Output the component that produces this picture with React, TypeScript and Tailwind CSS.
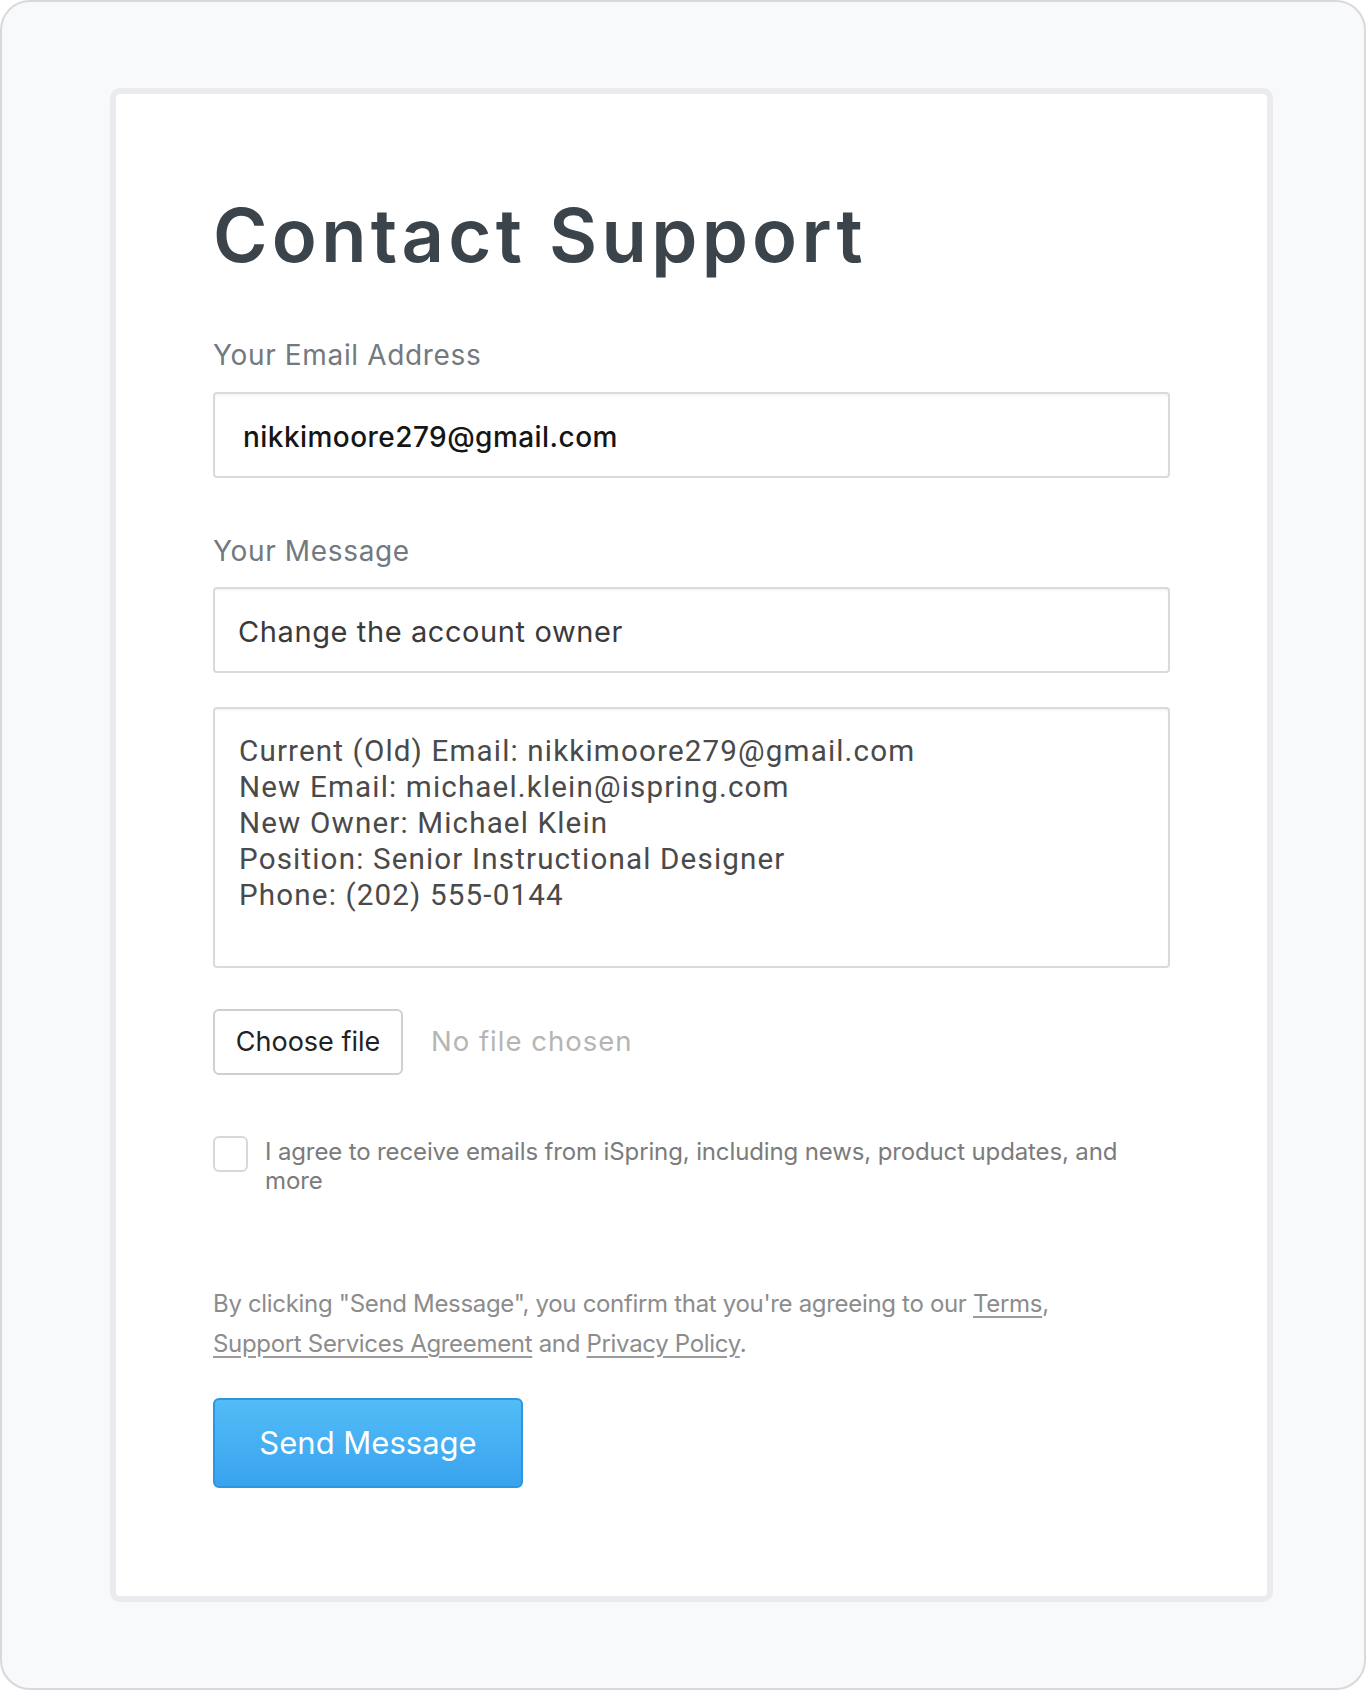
import React from "react";

const UI = { fontFamily: "Inter, 'Open Sans', sans-serif" };
const MONO = { fontFamily: "Roboto, 'Liberation Sans', sans-serif" };

export default function App() {
  return (
    <div
      className="w-[1366px] h-[1690px] bg-[#f8f9fb] border-2 border-[#d9d9dc] rounded-[30px] pl-[108px] pt-[86px]"
      style={UI}
    >
      <div className="w-[1163px] h-[1514px] bg-white border-[6px] border-[#ebebef] rounded-[10px] px-[97px] pt-[104px] flex flex-col">
        <h1 className="text-[74px] leading-[74px] font-semibold text-[#3c444b] tracking-[4.3px] h-[74px] whitespace-nowrap">
          Contact Support
        </h1>

        <label className="mt-[66px] text-[28px] leading-[34px] h-[34px] text-[#72797f] tracking-[0.65px]">
          Your Email Address
        </label>
        <div className="mt-[20px] h-[86px] border-2 border-[#dadada] rounded-[4px] shadow-[inset_0_2px_2px_rgba(0,0,0,0.04)] flex items-center pl-[28px] pt-[4px]">
          <span className="text-[28px] text-[#151515] font-medium tracking-[0.45px]">nikkimoore279@gmail.com</span>
        </div>

        <label className="mt-[56px] text-[28px] leading-[34px] h-[34px] text-[#72797f] tracking-[0.65px]">
          Your Message
        </label>
        <div className="mt-[19px] h-[86px] border-2 border-[#dadada] rounded-[4px] shadow-[inset_0_2px_2px_rgba(0,0,0,0.04)] flex items-center pl-[23px] pt-[4px]">
          <span className="text-[29px] text-[#3a3a3a] tracking-[0.6px]">Change the account owner</span>
        </div>

        <div
          className="mt-[34px] h-[261px] border-2 border-[#dadada] rounded-[4px] shadow-[inset_0_2px_2px_rgba(0,0,0,0.04)] pl-[24px] pt-[25px] text-[29.6px] leading-[35.9px] text-[#4a4a4a] tracking-[1.15px]"
          style={MONO}
        >
          <div>Current (Old) Email: nikkimoore279@gmail.com</div>
          <div>New Email: michael.klein@ispring.com</div>
          <div>New Owner: Michael Klein</div>
          <div>Position: Senior Instructional Designer</div>
          <div>Phone: (202) 555-0144</div>
        </div>

        <div className="mt-[41px] flex items-center">
          <div className="w-[190px] h-[66px] border-2 border-[#cfcfcf] rounded-[6px] flex items-center justify-center text-[27px] text-[#222]">
            Choose file
          </div>
          <span className="ml-[28px] text-[27.5px] text-[#b5b5b5] tracking-[1px]">No file chosen</span>
        </div>

        <div className="mt-[61px] flex items-start">
          <div className="w-[35px] h-[36px] shrink-0 border-2 border-[#d8d8d8] rounded-[6px] bg-white" />
          <p className="ml-[17px] mt-px text-[24px] leading-[29px] text-[#7b7b7b] tracking-[-0.13px]">
            I agree to receive emails from iSpring, including news, product updates, and
            <br />
            more
          </p>
        </div>

        <p className="mt-[89px] text-[24px] leading-[40px] text-[#8c8c8c] tracking-[-0.32px]">
          By clicking "Send Message", you confirm that you're agreeing to our{" "}
          <span className="underline underline-offset-4 decoration-[#9a9a9a]">Terms</span>,
          <br />
          <span className="underline underline-offset-4 decoration-[#9a9a9a]">Support Services Agreement</span> and{" "}
          <span className="underline underline-offset-4 decoration-[#9a9a9a]">Privacy Policy</span>.
        </p>

        <div className="mt-[34px]">
          <button className="w-[310px] h-[90px] rounded-[6px] border-2 border-[#2a97e0] bg-gradient-to-b from-[#52bcf7] to-[#38a3ee] text-white text-[31px] flex items-center justify-center">
            Send Message
          </button>
        </div>
      </div>
    </div>
  );
}
